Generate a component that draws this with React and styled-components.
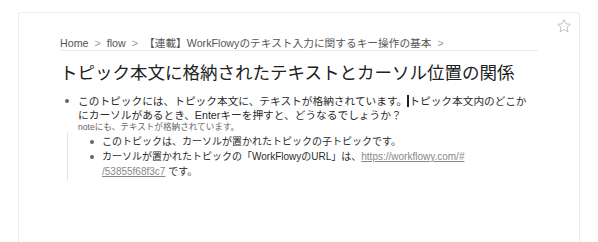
import React from 'react';
import styled, { createGlobalStyle } from 'styled-components';

const GlobalStyle = createGlobalStyle`
  html, body {
    margin: 0;
    padding: 0;
    background: #fff;
    overflow: hidden;
  }
  body {
    font-family: "Liberation Sans", "Noto Sans CJK JP", sans-serif;
    color: #333;
  }
`;

const Page = styled.div`
  width: 598px;
  height: 242px;
  padding: 12px 18px 0;
  box-sizing: border-box;
  overflow: hidden;
`;

const Card = styled.div`
  position: relative;
  min-height: 280px;
  border: 1px solid #ececec;
  border-radius: 3px;
  box-shadow: 0 0 1px rgba(0, 0, 0, 0.04);
  padding: 23px 41px 0;
  box-sizing: border-box;
`;

const Star = styled.svg`
  position: absolute;
  top: 5px;
  right: 7px;
  width: 16px;
  height: 16px;
`;

const Breadcrumb = styled.div`
  font-size: 10.7px;
  line-height: 14px;
  color: #555;
  border-bottom: 1px solid #ebebeb;
  white-space: nowrap;
`;

const Sep = styled.span`
  color: #999;
  margin: 0 6px;
`;

const Title = styled.h1`
  margin: 9px 0 0;
  font-size: 17.5px;
  line-height: 26px;
  font-weight: 400;
  color: #222;
  white-space: nowrap;
`;

const Tree = styled.div`
  margin-top: 8px;
  padding-right: 5px;
`;

const Children = styled.div`
  margin-left: 7px;
  padding: 2px 0;
  border-left: 1px solid #e6e6e6;
`;

const Row = styled.div`
  display: flex;
  align-items: flex-start;
`;

const BulletCol = styled.div`
  flex: 0 0 ${(p) => p.$width}px;
  height: ${(p) => p.$lh}px;
  display: flex;
  align-items: center;
  padding-left: ${(p) => p.$offset}px;
  box-sizing: border-box;
`;

const Dot = styled.span`
  width: 4px;
  height: 4px;
  border-radius: 50%;
  background: #666;
`;

const Name = styled.div`
  flex: 1;
  min-width: 0;
  font-size: ${(p) => p.$size}px;
  line-height: ${(p) => p.$lh}px;
  color: #2b2b2b;
`;

const Note = styled.div`
  font-size: 8.6px;
  line-height: 10px;
  color: #666;
  margin-left: 18px;
`;

const Cursor = styled.span`
  display: inline-block;
  width: 1.5px;
  height: 12px;
  background: #222;
  vertical-align: -2px;
  margin-right: 0.5px;
`;

const Link = styled.a`
  color: #888;
  text-decoration: underline;
`;

const StarIcon = () => (
  <Star viewBox="0 0 24 24" fill="none" stroke="#b8b8b8" strokeWidth="1.3" strokeLinejoin="round">
    <path d="M12 2.5l2.9 6.2 6.7.7-5 4.6 1.4 6.7L12 17.3l-5.9 3.4 1.4-6.7-5-4.6 6.7-.7z" />
  </Star>
);

function ChildItem({ children }) {
  return (
    <Row>
      <BulletCol $width={34} $lh={15} $offset={22}>
        <Dot />
      </BulletCol>
      <Name $size={10} $lh={15}>
        {children}
      </Name>
    </Row>
  );
}

export default function App() {
  return (
    <Page>
      <GlobalStyle />
      <Card>
        <StarIcon />
        <Breadcrumb>
          Home<Sep>&gt;</Sep>flow<Sep>&gt;</Sep>【連載】WorkFlowyのテキスト入力に関するキー操作の基本<Sep>&gt;</Sep>
        </Breadcrumb>
        <Title>トピック本文に格納されたテキストとカーソル位置の関係</Title>
        <Tree>
          <Row>
            <BulletCol $width={18} $lh={14} $offset={5}>
              <Dot />
            </BulletCol>
            <Name $size={10.7} $lh={14}>
              このトピックには、トピック本文に、テキストが格納されています。<Cursor />トピック本文内のどこかにカーソルがあるとき、Enterキーを押すと、どうなるでしょうか？
            </Name>
          </Row>
          <Note>noteにも、テキストが格納されています。</Note>
          <Children>
            <ChildItem>このトピックは、カーソルが置かれたトピックの子トピックです。</ChildItem>
            <ChildItem>
              カーソルが置かれたトピックの「WorkFlowyのURL」は、
              <Link href="#">
                https://workflowy.com/#
                <br />
                /53855f68f3c7
              </Link>{' '}
              です。
            </ChildItem>
          </Children>
        </Tree>
      </Card>
    </Page>
  );
}
